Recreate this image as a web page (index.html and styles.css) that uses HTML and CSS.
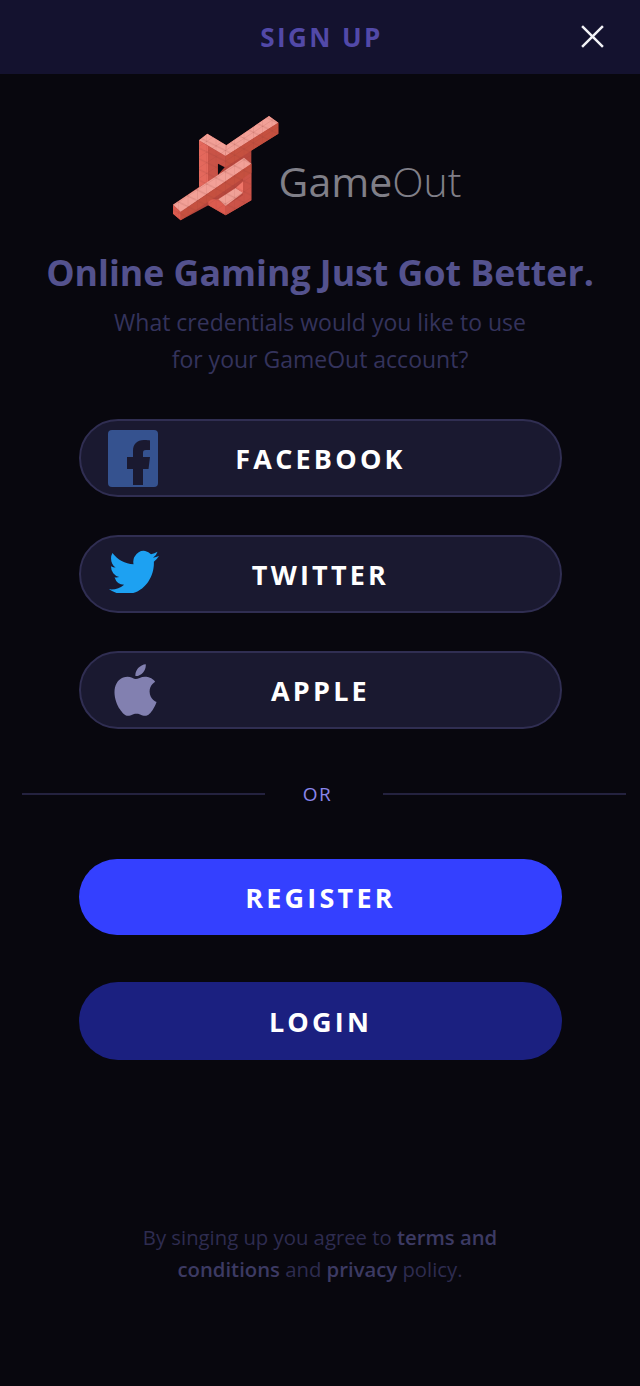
FILE: index.html
```html
<!DOCTYPE html>
<html lang="en">
<head>
<meta charset="utf-8">
<title>GameOut - Sign up</title>
<link rel="stylesheet" href="styles.css">
</head>
<body>
<div class="screen">
  <header class="topbar">
    <h1 class="topbar-title">SIGN UP</h1>
    <svg class="close" viewBox="0 0 24 24" aria-label="Close"><path d="M2 2 L22 22 M22 2 L2 22"/></svg>
  </header>
  <main class="content">
    <div class="brand">
      <svg class="logo" viewBox="0 0 345 336">
        <defs>
          <pattern id="mesh" width="28" height="32" patternUnits="userSpaceOnUse" patternTransform="skewY(-33)">
            <path d="M0 0H28M0 0V32M0 0L28 32" fill="none" stroke="#8f3a34" stroke-width="1.500" opacity=".45"/>
          </pattern>
        </defs>
        <polygon fill="#b8473d" points="90,85 115,65 172,100 300,12 328,32 328,65 247,115 247,265 170,310 118,280 35,325 12,305 12,278 90,225"/>
        <polygon fill="#e4685c" points="90,85 118,103 118,210 90,225"/>
        <polygon fill="#c95347" points="118,103 170,132 170,165 145,155 145,190 118,210"/>
        <polygon fill="#f2a097" points="115,65 172,100 170,132 90,85"/>
        <polygon fill="#f2a097" points="300,12 328,32 170,132 172,100"/>
        <polygon fill="#c5503f" points="328,32 328,65 170,165 170,132"/>
        <polygon fill="#cc5348" points="247,155 247,265 170,310 170,282 222,250 222,170"/>
        <polygon fill="#dc5b4f" points="118,280 170,310 170,282 148,262 118,262"/>
        <polygon fill="#f0a096" points="148,262 200,228 222,242 170,282"/>
        <polygon fill="#f07568" points="200,228 222,208 222,242"/>
        <polygon fill="#f2a097" points="12,278 225,137 247,155 35,300"/>
        <polygon fill="#dc5b4f" points="12,278 35,300 35,325 12,305"/>
        <polygon fill="#c5503f" points="35,300 247,155 247,182 35,325"/>
        <polygon fill="url(#mesh)" points="90,85 115,65 172,100 300,12 328,32 328,65 247,115 247,265 170,310 118,280 35,325 12,305 12,278 90,225"/>
        <polygon fill="#08070e" points="147,155 167,166 147,188"/>
      </svg>
      <div class="wordmark"><span class="wordmark-bold">Game</span><span class="wordmark-thin">Out</span></div>
    </div>
    <h2 class="headline">Online Gaming Just Got Better.</h2>
    <p class="subtitle">What credentials would you like to use<br>for your GameOut account?</p>

    <div class="socials">
      <button class="pill pill-social">
        <span class="pill-icon">
          <svg class="icon-fb" viewBox="0 0 50 57"><rect width="50" height="57" rx="4" fill="#35528f"/><path fill="#1a1930" d="M25 55V39H19V27H25V21C25 14 29 10 36 10C39 10 41 10.300 42 10.500V20H38C35.500 20 35 21 35 23V27H42L40.500 39H35V55Z"/></svg>
        </span>
        <span class="pill-label">FACEBOOK</span>
      </button>
      <button class="pill pill-social">
        <span class="pill-icon">
          <svg class="icon-tw" viewBox="0 1.400 24 19.800" preserveAspectRatio="none"><path fill="#1da1f2" d="M23.953 4.57a10 10 0 01-2.825.775 4.958 4.958 0 002.163-2.723c-.951.555-2.005.959-3.127 1.184a4.92 4.92 0 00-8.384 4.482C7.69 8.095 4.067 6.13 1.64 3.162a4.822 4.822 0 00-.666 2.475c0 1.71.87 3.213 2.188 4.096a4.904 4.904 0 01-2.228-.616v.06a4.923 4.923 0 003.946 4.827 4.996 4.996 0 01-2.212.085 4.936 4.936 0 004.604 3.417 9.867 9.867 0 01-6.102 2.105c-.39 0-.779-.023-1.17-.067a13.995 13.995 0 007.557 2.209c9.053 0 13.998-7.496 13.998-13.985 0-.21 0-.42-.015-.63A9.935 9.935 0 0024 4.59z"/></svg>
        </span>
        <span class="pill-label">TWITTER</span>
      </button>
      <button class="pill pill-social">
        <span class="pill-icon">
          <svg class="icon-ap" viewBox="2 0 20 24"><path fill="#8280b0" d="M12.152 6.896c-.948 0-2.415-1.078-3.96-1.04-2.04.027-3.91 1.183-4.961 3.014-2.117 3.675-.546 9.103 1.519 12.09 1.013 1.454 2.208 3.09 3.792 3.039 1.52-.065 2.09-.987 3.935-.987 1.831 0 2.35.987 3.96.948 1.637-.026 2.676-1.48 3.676-2.948 1.156-1.688 1.636-3.325 1.662-3.415-.039-.013-3.182-1.221-3.22-4.857-.026-3.04 2.48-4.494 2.597-4.559-1.429-2.09-3.623-2.324-4.39-2.376-2-.156-3.675 1.09-4.61 1.09zM15.53 3.83c.843-1.012 1.4-2.427 1.245-3.83-1.207.052-2.662.805-3.532 1.818-.78.896-1.454 2.338-1.273 3.714 1.338.104 2.715-.688 3.559-1.701"/></svg>
        </span>
        <span class="pill-label">APPLE</span>
      </button>
    </div>

    <div class="divider"><span class="divider-line"></span><span class="divider-text">OR</span><span class="divider-line"></span></div>

    <button class="pill pill-register"><span class="pill-label">REGISTER</span></button>
    <button class="pill pill-login"><span class="pill-label">LOGIN</span></button>

    <p class="legal">By singing up you agree to <strong>terms and<br>conditions</strong> and <strong>privacy</strong> policy.</p>
  </main>
</div>
</body>
</html>
```

FILE: styles.css
```css
* { box-sizing: border-box; }
html, body { margin: 0; padding: 0; }
body {
  width: 640px;
  height: 1386px;
  background: #08070e;
  font-family: "Open Sans", "Liberation Sans", sans-serif;
  overflow: hidden;
}
.screen { display: flex; flex-direction: column; height: 1386px; }
.topbar {
  height: 74px;
  background: #14122f;
  display: flex;
  align-items: center;
  justify-content: center;
  position: relative;
  flex: none;
}
.topbar-title {
  margin: 0;
  padding-left: 3px;
  font-size: 26px;
  font-weight: 700;
  letter-spacing: 2.400px;
  color: #5249a8;
}
.close {
  position: absolute;
  right: 35px;
  top: 24px;
  width: 25px;
  height: 25px;
  fill: none;
  stroke: #f2f2f6;
  stroke-width: 2.400;
}
.content {
  display: flex;
  flex-direction: column;
  align-items: center;
  padding: 38px 0 0;
}
.brand { display: flex; align-items: flex-start; height: 112px; margin-left: -10px; }
.logo { width: 115px; height: 112px; display: block; flex: none; }
.wordmark { font-size: 41px; line-height: 48px; margin: 45px 0 0 -5px; color: #807f88; }
.wordmark-bold { font-weight: 400; }
.wordmark-thin { font-weight: 300; }
.headline {
  margin: 26px 0 0;
  font-size: 35.700px;
  line-height: 44px;
  font-weight: 700;
  color: #54528e;
  white-space: nowrap;
}
.subtitle {
  margin: 10px 0 0;
  font-size: 23px;
  line-height: 37px;
  text-align: center;
  color: #34335c;
}
.socials { display: flex; flex-direction: column; gap: 38px; margin-top: 41px; }
.pill {
  width: 483px;
  height: 77px;
  border-radius: 39px;
  border: 0;
  padding: 0;
  margin-left: 1px;
  font: inherit;
  color: #fff;
  display: grid;
  grid-template-columns: 1fr auto 1fr;
  align-items: center;
  flex: none;
}
.pill-social { background: #1a1930; border: 2px solid #302e52; height: 78px; }
.pill-icon { grid-column: 1; display: flex; align-items: center; justify-content: flex-start; }
.pill-label {
  grid-column: 2;
  font-size: 27px;
  font-weight: 700;
  letter-spacing: 3.200px;
}
.icon-fb { width: 50px; height: 57px; margin-left: 27px; }
.icon-tw { width: 50px; height: 44px; margin: -7px 0 0 28px; }
.icon-ap { width: 43px; height: 52px; margin-left: 33px; }
.divider {
  display: flex;
  align-items: center;
  width: 604px;
  margin: 55px 0 0 7px;
  height: 20px;
}
.divider-line { flex: 1; height: 2px; background: #24223f; }
.divider-text {
  width: 118px;
  padding-right: 12px;
  text-align: center;
  font-size: 19px;
  font-weight: 500;
  letter-spacing: 1.500px;
  color: #8a85ea;
}
.pill-register { background: #3440ff; margin-top: 55px; height: 76px; }
.pill-login { background: #1b2080; margin-top: 47px; height: 78px; }
.legal {
  margin: 161px 0 0;
  font-size: 20.300px;
  line-height: 32px;
  text-align: center;
  color: #2e2c50;
}
.legal strong { font-weight: 600; color: #3c3a63; }
```
